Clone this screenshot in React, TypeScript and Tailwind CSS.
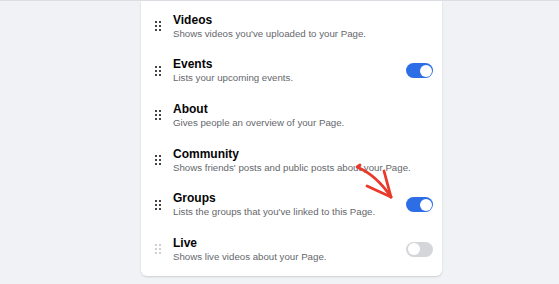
import React from 'react';

type Row = { title: string; desc: string; toggle?: 'on' | 'off'; faded?: boolean };

const rows: Row[] = [
  { title: 'Videos', desc: "Shows videos you've uploaded to your Page." },
  { title: 'Events', desc: 'Lists your upcoming events.', toggle: 'on' },
  { title: 'About', desc: 'Gives people an overview of your Page.' },
  { title: 'Community', desc: "Shows friends' posts and public posts about your Page." },
  { title: 'Groups', desc: "Lists the groups that you've linked to this Page.", toggle: 'on' },
  { title: 'Live', desc: 'Shows live videos about your Page.', toggle: 'off', faded: true },
];

const Handle: React.FC<{ faded?: boolean }> = ({ faded }) => (
  <div className="grid grid-cols-2 gap-x-[2px] gap-y-[2px] w-[6px]">
    {Array.from({ length: 6 }).map((_, i) => (
      <span key={i} className={`block w-[2px] h-[2px] rounded-full ${faded ? 'bg-[#bcc0c4]' : 'bg-[#050505]'}`} />
    ))}
  </div>
);

const Toggle: React.FC<{ on: boolean }> = ({ on }) => (
  <div
    className={`w-[27px] h-[15px] rounded-full flex items-center p-[1.5px] ${
      on ? 'bg-[#2d6ee6] justify-end' : 'bg-[#d4d6d9] justify-start'
    }`}
  >
    <span className="block w-[12px] h-[12px] rounded-full bg-white" />
  </div>
);

export default function App() {
  return (
    <div
      className="w-[559px] h-[284px] bg-[#f0f2f5] border-t border-[#dadde1] overflow-hidden relative"
      style={{ fontFamily: '"Helvetica Neue", "Liberation Sans", Arial, sans-serif' }}
    >
      <div className="ml-[141px] w-[301px] bg-white rounded-b-[6px] shadow-[0_1px_2px_rgba(0,0,0,0.15)] pt-[3px] pb-[4px]">
        {rows.map((r) => (
          <div key={r.title} className="h-[44.6px] flex items-center pl-[14px] pr-[9px]">
            <Handle faded={r.faded} />
            <div className="ml-[12px] flex-1 flex flex-col">
              <span className="text-[12px] leading-[14px] font-semibold text-[#050505]">{r.title}</span>
              <span className="text-[9.7px] leading-[12px] mt-[1px] text-[#65676b]">{r.desc}</span>
            </div>
            {r.toggle && <Toggle on={r.toggle === 'on'} />}
          </div>
        ))}
      </div>

      {/* hand-drawn arrow */}
      <svg className="absolute left-0 top-0" width="559" height="284" viewBox="0 0 559 284" fill="none">
        <g stroke="#e8392b" strokeWidth="2.8" strokeLinecap="round" strokeLinejoin="round">
          <path d="M360 164 L357 166 C 369 171, 381 181, 391 196" />
          <path d="M384 170 L 391 196" />
          <path d="M367 185 L 391 196" />
        </g>
      </svg>
    </div>
  );
}
